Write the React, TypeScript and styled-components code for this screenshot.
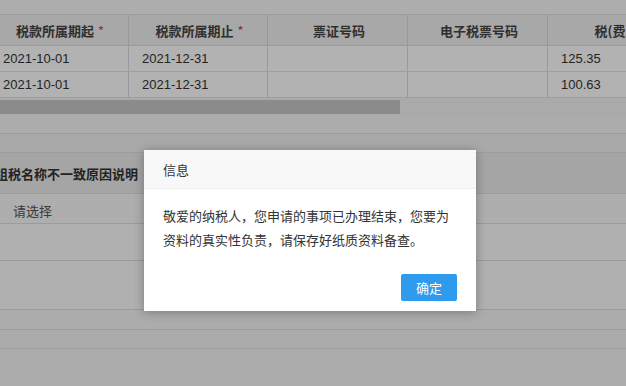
import styled, { createGlobalStyle } from 'styled-components';

const GlobalStyle = createGlobalStyle`
  html, body {
    margin: 0;
    padding: 0;
    background: #fff;
  }
  body {
    font-family: "Liberation Sans", "Noto Sans CJK SC", sans-serif;
    color: #333;
  }
`;

const Page = styled.div`
  position: relative;
  width: 626px;
  height: 386px;
  overflow: hidden;
  background: #f6f6f6;
`;

const TopStrip = styled.div`
  height: 14px;
  background: #fafafa;
  border-bottom: 1px solid #e2e2e2;
`;

const Table = styled.div`
  display: grid;
  grid-template-columns: 140px 139px 140px 140px 140px;
  margin-left: -11px;
  width: 700px;
`;

const HeadCell = styled.div`
  height: 30px;
  display: flex;
  align-items: center;
  justify-content: center;
  padding-left: 3px;
  background: #f1f1f1;
  border-right: 1px solid #dcdcdc;
  border-bottom: 1px solid #dcdcdc;
  font-size: 13px;
  font-weight: bold;
  color: #444;
  font-family: "Noto Sans CJK SC", sans-serif;
  white-space: nowrap;
  overflow: hidden;
`;

const Star = styled.span`
  color: #e04040;
  margin-left: 4px;
  font-weight: normal;
`;

const Cell = styled.div<{ $indent?: number }>`
  height: 25px;
  display: flex;
  align-items: center;
  padding-left: ${({ $indent }) => $indent ?? 13}px;
  background: #fff;
  border-right: 1px solid #dcdcdc;
  border-bottom: 1px solid #e2e2e2;
  font-size: 13px;
  color: #333;
`;

const ScrollTrack = styled.div`
  height: 17px;
  background: #f4f4f4;
  display: flex;
  align-items: center;
`;

const ScrollThumb = styled.div`
  width: 400px;
  height: 14px;
  background: #c8c8c8;
`;

const Band = styled.div<{ $h: number; $bg?: string }>`
  height: ${({ $h }) => $h}px;
  background: ${({ $bg }) => $bg ?? '#f7f7f7'};
  border-bottom: 1px solid #dedede;
`;

const FormRow = styled.div<{ $h: number; $head?: boolean }>`
  display: flex;
  height: ${({ $h }) => $h}px;
  background: ${({ $head }) => ($head ? '#ededed' : '#fafafa')};
  border-bottom: 1px solid #dedede;
`;

const FormLabel = styled.div`
  width: 138px;
  flex-shrink: 0;
  display: flex;
  align-items: center;
  justify-content: flex-end;
  font-family: "Noto Sans CJK SC", sans-serif;
  font-size: 13px;
  font-weight: bold;
  color: #333;
  white-space: nowrap;
  overflow: hidden;
`;

const FormValue = styled.div`
  padding-left: 13px;
  padding-top: 7px;
  font-family: "Noto Sans CJK SC", sans-serif;
  font-size: 13px;
  color: #555;
`;

const Overlay = styled.div`
  position: absolute;
  inset: 0;
  background: rgba(0, 0, 0, 0.3);
`;

const Dialog = styled.div`
  position: absolute;
  left: 144px;
  top: 150px;
  width: 332px;
  height: 161px;
  background: #fff;
  box-shadow: 0 1px 10px rgba(0, 0, 0, 0.3);
  display: flex;
  flex-direction: column;
  font-family: "Noto Sans CJK SC", sans-serif;
`;

const DialogTitle = styled.div`
  height: 38px;
  padding-left: 19px;
  display: flex;
  align-items: center;
  background: #f8f8f8;
  border-bottom: 1px solid #eee;
  font-size: 13px;
  color: #333;
`;

const DialogBody = styled.div`
  padding: 15px 19px 0;
  font-size: 13px;
  line-height: 24px;
  color: #333;
`;

const DialogFooter = styled.div`
  margin-top: auto;
  padding: 0 19px 10px;
  display: flex;
  justify-content: flex-end;
`;

const OkButton = styled.button`
  width: 56px;
  height: 27px;
  border: none;
  border-radius: 2px;
  background: #2e9bef;
  color: #fff;
  font-family: "Noto Sans CJK SC", sans-serif;
  font-size: 13px;
  padding: 0;
`;

const heads = ['税款所属期起', '税款所属期止', '票证号码', '电子税票号码', '税(费)额'];
const rows = [
  ['2021-10-01', '2021-12-31', '', '', '125.35'],
  ['2021-10-01', '2021-12-31', '', '', '100.63'],
];

export default function App() {
  return (
    <Page>
      <GlobalStyle />
      <TopStrip />
      <Table>
        {heads.map((h, i) => (
          <HeadCell key={h}>
            {h}
            {i < 2 && <Star>*</Star>}
          </HeadCell>
        ))}
        {rows.map((r, ri) =>
          r.map((v, ci) => (
            <Cell key={`${ri}-${ci}`} $indent={ci === 0 ? 14 : 13}>
              {v}
            </Cell>
          ))
        )}
      </Table>
      <ScrollTrack>
        <ScrollThumb />
      </ScrollTrack>
      <Band $h={18} />
      <Band $h={18} $bg="#f3f3f3" />
      <FormRow $h={40} $head>
        <FormLabel>登记组税名称不一致原因说明</FormLabel>
      </FormRow>
      <FormRow $h={29}>
        <FormValue>请选择</FormValue>
      </FormRow>
      <Band $h={36} $bg="#fcfcfc" />
      <Band $h={48} $bg="#fdfdfd" />
      <Band $h={19} $bg="#f7f7f7" />
      <Band $h={18} $bg="#f5f5f5" />
      <Overlay />
      <Dialog>
        <DialogTitle>信息</DialogTitle>
        <DialogBody>
          敬爱的纳税人，您申请的事项已办理结束，您要为
          <br />
          资料的真实性负责，请保存好纸质资料备查。
        </DialogBody>
        <DialogFooter>
          <OkButton>确定</OkButton>
        </DialogFooter>
      </Dialog>
    </Page>
  );
}
